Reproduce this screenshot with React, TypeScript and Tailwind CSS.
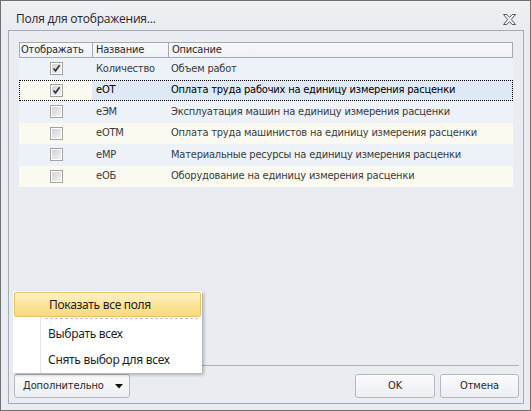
import React from "react";

const rows = [
  { name: "Количество", desc: "Объем работ", checked: true },
  { name: "еОТ", desc: "Оплата труда рабочих на единицу измерения расценки", checked: true, selected: true },
  { name: "еЭМ", desc: "Эксплуатация машин на единицу измерения расценки", checked: false },
  { name: "еОТМ", desc: "Оплата труда машинистов на единицу измерения расценки", checked: false },
  { name: "еМР", desc: "Материальные ресурсы на единицу измерения расценки", checked: false },
  { name: "еОБ", desc: "Оборудование на единицу измерения расценки", checked: false },
];

function CheckBox({ checked }: { checked: boolean }) {
  return (
    <div className="w-[13px] h-[13px] border border-[#a3a3a3] bg-white p-[1px]">
      <div className="w-full h-full bg-gradient-to-br from-[#d3d3d3] to-[#f2f2f2] flex items-center justify-center">
        {checked && (
          <svg width="9" height="9" viewBox="0 0 9 9">
            <path d="M1.5 4.5 L3.5 6.8 L7.6 1.2" fill="none" stroke="#383838" strokeWidth="1.7" />
          </svg>
        )}
      </div>
    </div>
  );
}

export default function App() {
  const grid = { fontFamily: '"DejaVu Sans Condensed", "DejaVu Sans", sans-serif', fontStretch: "condensed" as const };
  return (
    <div className="relative w-[531px] h-[411px] border border-[#707070] bg-[#e9ecf0] flex flex-col overflow-hidden">
      {/* title bar */}
      <div className="h-[29px] shrink-0 flex items-center justify-between pl-[15px] pr-[14px] pt-[7px] bg-gradient-to-b from-[#eef0f3] to-[#e9ecf0]">
        <span
          className="text-[12px] tracking-[-0.2px] text-[#26262e]"
          style={{ fontFamily: '"Open Sans", "Noto Sans", sans-serif' }}
        >
          Поля для отображения...
        </span>
        <svg width="13" height="11" viewBox="0 0 13 11">
          <polygon
            points="0.5,0.5 3.8,0.5 6.5,3.4 9.2,0.5 12.5,0.5 8.3,5.5 12.5,10.5 9.2,10.5 6.5,7.6 3.8,10.5 0.5,10.5 4.7,5.5"
            fill="#f4f5f6"
            stroke="#555"
            strokeWidth="1"
            strokeLinejoin="round"
          />
        </svg>
      </div>

      {/* main panel */}
      <div className="flex-1 ml-[7px] mr-[6px] mb-[6px] border border-[#a7abb1] flex flex-col">
        <div className="pt-[11px] pl-[10px] pr-[10px] flex-1" style={grid}>
          <div className="w-[494px] text-[11px] tracking-[-0.2px]">
            <div className="flex h-[16px] border border-[#a4aab0] bg-gradient-to-b from-[#f6f8fa] to-[#eff2f6] text-[#2a2a2a]">
              <div className="w-[73px] border-r border-[#a4aab0] pl-[1px] leading-[14px]">Отображать</div>
              <div className="w-[76px] border-r border-[#a4aab0] pl-[3px] leading-[14px]">Название</div>
              <div className="flex-1 pl-[3px] leading-[14px]">Описание</div>
            </div>
            {rows.map((r, i) => {
              const blue = i % 2 === 0;
              const bg = blue ? "bg-[#edf1f8]" : "bg-[#fbfaf1]";
              return (
                <div
                  key={r.name}
                  className={`flex h-[21.5px] items-center ${r.selected ? "outline outline-1 outline-dotted outline-black -outline-offset-1 text-black" : "text-[#3a3a3a]"} ${bg}`}
                >
                  <div className="w-[73px] h-full flex items-center justify-center pl-[1px]">
                    <CheckBox checked={r.checked} />
                  </div>
                  <div className={`flex-1 h-full flex items-center ${r.selected ? "bg-[#dfe8f5]" : ""}`}>
                    <div className="w-[76px] pl-[4px]">{r.name}</div>
                    <div className="flex-1 pl-[3px]">{r.desc}</div>
                  </div>
                </div>
              );
            })}
          </div>
        </div>

        {/* footer */}
        <div className="mx-[4px] h-px bg-[#aeb2b7]" />
        <div
          className="h-[37px] flex items-start justify-between pt-[8px] pl-[5px] pr-[4px] text-[11px] tracking-[-0.1px] text-[#2a2a2a]"
          style={grid}
        >
          <button className="w-[116px] h-[24px] rounded-[3px] border border-[#b5b9be] bg-gradient-to-b from-[#fbfbfc] to-[#eceef1] flex items-center pl-[8px] gap-[11px]">
            <span>Дополнительно</span>
            <svg width="8" height="5" viewBox="0 0 8 5">
              <polygon points="0,0 8,0 4,4.5" fill="#111" />
            </svg>
          </button>
          <div className="flex gap-[5px]">
            <button className="w-[80px] h-[24px] rounded-[3px] border border-[#b5b9be] bg-gradient-to-b from-[#fbfbfc] to-[#eceef1]">OK</button>
            <button className="w-[79px] h-[24px] rounded-[3px] border border-[#b5b9be] bg-gradient-to-b from-[#fbfbfc] to-[#eceef1]">Отмена</button>
          </div>
        </div>
      </div>

      {/* popup menu */}
      <div
        className="absolute left-[12px] top-[290px] w-[189px] h-[82px] bg-white shadow-[2px_2px_3px_rgba(0,0,0,0.25)] text-[12px] tracking-[-0.3px] text-[#1e1e1e] flex flex-col"
        style={{ fontFamily: '"Noto Sans", "Open Sans", sans-serif' }}
      >
        <div className="mx-[1px] mt-[1px] h-[26px] rounded-[2px] border border-[#e4c46a] bg-gradient-to-b from-[#fdf1c6] via-[#fbe49a] to-[#f8da7c] flex items-center pl-[34px]">
          Показать все поля
        </div>
        <div className="flex flex-1">
          <div className="w-[28px] border-r border-[#e2e3e4]" />
          <div className="flex-1 flex flex-col">
            <div className="mx-[4px] mt-[1px] border-t border-dashed border-[#c5c5c5]" />
            <div className="h-[26px] flex items-center pl-[7px] mt-[2px]">Выбрать всех</div>
            <div className="h-[26px] flex items-center pl-[7px]">Снять выбор для всех</div>
          </div>
        </div>
      </div>
    </div>
  );
}
